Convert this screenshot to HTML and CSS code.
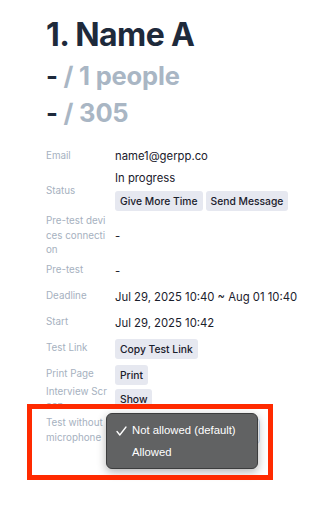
FILE: index.html
```html
<!DOCTYPE html>
<html lang="en">
<head>
    <title>Candidate</title>
    <link rel="stylesheet" href="styles.css">
</head>
<body>
    <div class="page">
        <h1 class="title">1. Name A</h1>
        <p class="sub">- <span class="muted">/ 1 people</span></p>
        <p class="sub">- <span class="muted">/ 305</span></p>

        <div class="info">
            <div class="row">
                <div class="label">Email</div>
                <div class="value">name1@gerpp.co</div>
            </div>
            <div class="row">
                <div class="label">Status</div>
                <div class="value">
                    <div class="status">In progress</div>
                    <div class="btns">
                        <button type="button" class="btn">Give More Time</button>
                        <button type="button" class="btn">Send Message</button>
                    </div>
                </div>
            </div>
            <div class="row">
                <div class="label">Pre-test devices connection</div>
                <div class="value">-</div>
            </div>
            <div class="row">
                <div class="label">Pre-test</div>
                <div class="value">-</div>
            </div>
            <div class="row">
                <div class="label">Deadline</div>
                <div class="value">Jul 29, 2025 10:40 ~ Aug 01 10:40</div>
            </div>
            <div class="row">
                <div class="label">Start</div>
                <div class="value">Jul 29, 2025 10:42</div>
            </div>
            <div class="row">
                <div class="label">Test Link</div>
                <div class="value"><button type="button" class="btn">Copy Test Link</button></div>
            </div>
            <div class="row">
                <div class="label">Print Page</div>
                <div class="value"><button type="button" class="btn">Print</button></div>
            </div>
            <div class="row row-tight">
                <div class="label">Interview Screen</div>
                <div class="value"><button type="button" class="btn">Show</button></div>
            </div>
            <div class="row row-select">
                <div class="label">Test without microphone</div>
                <div class="value"><div class="select"></div></div>

                <!-- native select popup, open -->
                <div class="menu">
                    <div class="opt">
                        <svg class="check" width="11" height="10" viewBox="0 0 11 10">
                            <polyline points="1,5.5 3.8,9 10,1" fill="none" stroke="#fff" stroke-width="1.3" stroke-linecap="round" stroke-linejoin="round"/>
                        </svg>
                        Not allowed (default)
                    </div>
                    <div class="opt">Allowed</div>
                </div>
            </div>
        </div>

        <div class="highlight"></div>
    </div>
</body>
</html>
```

FILE: styles.css
```css
body {
    margin: 0;
    background-color: #fff;
    font-family: Inter, "Noto Sans", sans-serif;
    color: #1a202c;
}

.page {
    position: relative;
    padding: 15px 0 40px 46px;
}

.title {
    margin: 0;
    font-size: 32px;
    line-height: 40px;
    font-weight: 700;
    letter-spacing: -0.6px;
    color: #1e2a3b;
}

.sub {
    margin: 0;
    font-size: 25.5px;
    line-height: 37px;
    font-weight: 700;
    letter-spacing: -0.2px;
    color: #1e2a3b;
}

.title + .sub {
    margin-top: 2px;
}

.muted {
    color: #a9b6c4;
}

.info {
    margin-top: 12px;
}

.row {
    display: flex;
    align-items: center;
    min-height: 26px;
}

.row-tight {
    margin-top: -3px;
}

.label {
    width: 63px;
    flex-shrink: 0;
    margin-right: 6px;
    font-size: 9.8px;
    line-height: 14.5px;
    color: #a6b1c0;
    word-break: break-all;
}

.value {
    font-size: 11.3px;
    line-height: 18px;
}

.status {
    margin-bottom: 4px;
}

.btns {
    display: flex;
    gap: 3px;
    padding-bottom: 3px;
}

.btn {
    height: 20px;
    padding: 0 5px;
    border: none;
    border-radius: 3px;
    background-color: #e6e8f0;
    font-family: Inter, "Noto Sans", sans-serif;
    font-size: 10.3px;
    font-weight: 500;
    color: #1a202c;
}

.row-select {
    position: relative;
    min-height: 34px;
}

.select {
    width: 143px;
    height: 24px;
    border: 1px solid #c9dcf3;
    border-radius: 4px;
}

.menu {
    position: absolute;
    left: 60px;
    top: -1px;
    width: 150px;
    padding: 5px 0;
    background-color: #616263;
    border: 1px solid #3c3d3e;
    border-radius: 6px;
    box-shadow: 0 3px 10px rgba(0, 0, 0, 0.3);
    font-family: -apple-system, "Liberation Sans", Arial, sans-serif;
    font-size: 11.3px;
    font-weight: 500;
    color: #fff;
}

.opt {
    position: relative;
    height: 22px;
    line-height: 22px;
    padding-left: 25px;
}

.check {
    position: absolute;
    left: 9px;
    top: 7px;
}

.highlight {
    position: absolute;
    left: 27px;
    top: 404px;
    width: 236px;
    height: 66px;
    border: 5px solid #ff2a00;
}
```
